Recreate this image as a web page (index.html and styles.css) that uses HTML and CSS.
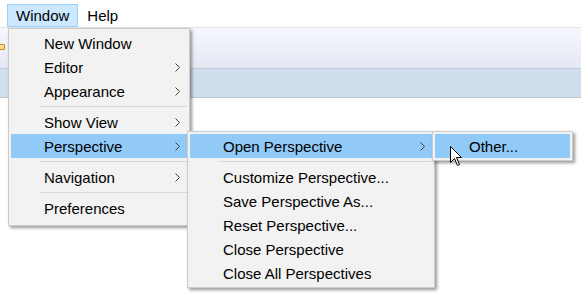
FILE: index.html
```html
<!DOCTYPE html>
<html>

<head>
    <meta charset="UTF-8">
    <link rel="stylesheet" href="styles.css">
</head>

<body>
    <div class="menubar">
        <span class="mb-item active">Window</span>
        <span class="mb-item">Help</span>
    </div>
    <div class="toolbar"><span class="tb-icon"></span></div>
    <div class="band"></div>
    <div class="editor"></div>

    <div class="menu menu-main">
        <div class="item"><span>New Window</span></div>
        <div class="item"><span>Editor</span><svg class="chev" width="5" height="9" viewBox="0 0 5 9"><polyline points="0.5,0.5 4.5,4.5 0.5,8.5" /></svg></div>
        <div class="item"><span>Appearance</span><svg class="chev" width="5" height="9" viewBox="0 0 5 9"><polyline points="0.5,0.5 4.5,4.5 0.5,8.5" /></svg></div>
        <div class="sep"></div>
        <div class="item"><span>Show View</span><svg class="chev" width="5" height="9" viewBox="0 0 5 9"><polyline points="0.5,0.5 4.5,4.5 0.5,8.5" /></svg></div>
        <div class="item hot"><span>Perspective</span><svg class="chev" width="5" height="9" viewBox="0 0 5 9"><polyline points="0.5,0.5 4.5,4.5 0.5,8.5" /></svg></div>
        <div class="sep"></div>
        <div class="item"><span>Navigation</span><svg class="chev" width="5" height="9" viewBox="0 0 5 9"><polyline points="0.5,0.5 4.5,4.5 0.5,8.5" /></svg></div>
        <div class="sep"></div>
        <div class="item"><span>Preferences</span></div>
    </div>

    <div class="menu menu-persp">
        <div class="item hot"><span>Open Perspective</span><svg class="chev" width="5" height="9" viewBox="0 0 5 9"><polyline points="0.5,0.5 4.5,4.5 0.5,8.5" /></svg></div>
        <div class="sep"></div>
        <div class="item"><span>Customize Perspective...</span></div>
        <div class="item"><span>Save Perspective As...</span></div>
        <div class="item"><span>Reset Perspective...</span></div>
        <div class="item"><span>Close Perspective</span></div>
        <div class="item"><span>Close All Perspectives</span></div>
    </div>

    <div class="menu menu-open">
        <div class="item hot"><span>Other...</span></div>
    </div>

    <!-- mouse pointer -->
    <svg class="cursor" width="13" height="21" viewBox="0 0 13 21">
        <polygon points="0.5,0.5 0.5,16.5 4.5,12.5 7.5,19.5 9.5,18.5 6.5,11.5 11.5,11.5" fill="#fff" stroke="#000" stroke-width="1" stroke-linejoin="miter" />
    </svg>
</body>

</html>
```

FILE: styles.css
```css
body {
    margin: 0;
    background-color: #fff;
    font-family: "Liberation Sans", Arial, sans-serif;
    font-size: 15px;
    color: #000;
    overflow: hidden;
}

.menubar {
    display: flex;
    height: 27px;
    padding-left: 7px;
    align-items: flex-end;
}

.mb-item {
    height: 23px;
    line-height: 22px;
    padding: 0 8px;
    box-sizing: border-box;
    border: 1px solid transparent;
}

.mb-item.active {
    background-color: #cce8ff;
    border-color: #99d1ff;
}

.toolbar {
    height: 40px;
    border-top: 1px solid #e3e3e3;
    border-bottom: 1px solid #c4c8d0;
    background: linear-gradient(#f6f7fc, #e4e8f5);
}

.tb-icon {
    display: block;
    width: 4px;
    height: 4px;
    margin-top: 16px;
    margin-left: -1px;
    background-color: #fbe08a;
    border: 1px solid #d08a1c;
    border-radius: 1px;
}

.band {
    height: 28px;
    background-color: #cfdfee;
    border-bottom: 1px solid #b9c4cf;
}

.menu {
    position: absolute;
    box-sizing: border-box;
    background-color: #f2f2f2;
    border: 1px solid #cccccc;
    padding: 2px;
    box-shadow: 2px 2px 3px rgba(0, 0, 0, 0.4);
}

.menu-main {
    left: 8px;
    top: 28px;
    width: 182px;
    padding-bottom: 5px;
}

.menu-persp {
    left: 187px;
    top: 131px;
    width: 248px;
}

.menu-open {
    left: 432px;
    top: 131px;
    width: 141px;
}

.item {
    display: flex;
    align-items: center;
    justify-content: space-between;
    height: 24px;
    padding: 0 7px 0 33px;
}

.menu-open .item {
    padding-left: 34px;
}

.item.hot {
    background-color: #91c9f7;
}

.chev {
    fill: none;
    stroke: #3c3c3c;
    stroke-width: 1;
}

.sep {
    height: 1px;
    margin: 3px 0 3px 29px;
    background-color: #d7d7d7;
}

.cursor {
    position: absolute;
    left: 450px;
    top: 146px;
}
```
